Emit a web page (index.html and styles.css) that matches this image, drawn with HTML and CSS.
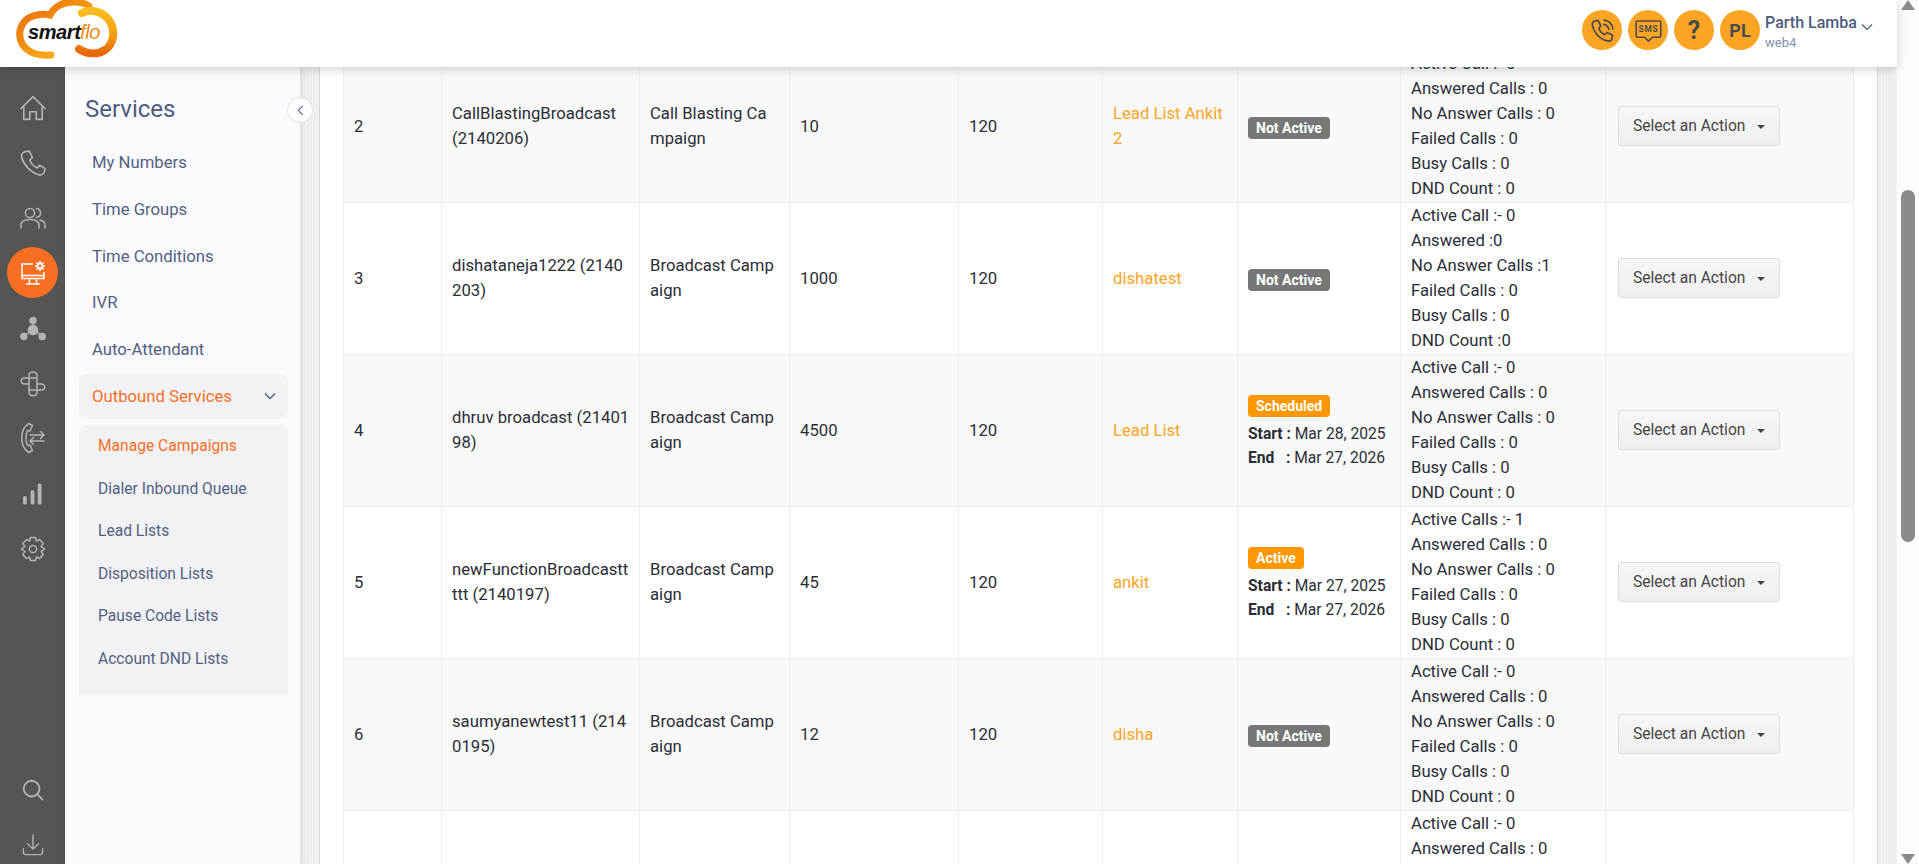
FILE: index.html
```html
<!DOCTYPE html>
<html lang="en">
<head>
    <meta charset="UTF-8">
    <title>Manage Campaigns</title>
    <link rel="stylesheet" href="styles.css">
</head>
<body>

<div class="app">

    <!-- Top header -->
    <header class="topbar">
        <svg class="logo" viewBox="0 0 104 62" width="104" height="62">
            <defs>
                <linearGradient id="logoLeft" x1="0" y1="0" x2="1" y2="1">
                    <stop offset="0" stop-color="#e8670c"/>
                    <stop offset="0.55" stop-color="#f49a10"/>
                    <stop offset="1" stop-color="#fbc02d"/>
                </linearGradient>
                <linearGradient id="logoRight" x1="0" y1="0" x2="0" y2="1">
                    <stop offset="0" stop-color="#fdbd1c"/>
                    <stop offset="0.6" stop-color="#f59a10"/>
                    <stop offset="1" stop-color="#e8670c"/>
                </linearGradient>
            </defs>
            <path d="M36 55 C26 56 14 54 8 45 C1 34 6 20 18 16 C24 14 30 14 35 15 C39 7 48 2 58 2 C64 2 70 3 74 6" fill="none" stroke="url(#logoLeft)" stroke-width="7" stroke-linecap="round"/>
            <path d="M67 13 C76 8 88 12 94 20 C101 30 99 44 90 50 C82 55 72 54 64 49" fill="none" stroke="url(#logoRight)" stroke-width="8" stroke-linecap="round"/>
            <text x="13" y="39" class="logo-smart">smart</text>
            <text x="65" y="39" class="logo-flo">flo</text>
        </svg>

        <div class="topbar-right">
            <span class="round-btn round-btn-first">
                <svg viewBox="0 0 24 24" width="27" height="27" fill="none" stroke="#4a4a4a" stroke-width="1.5" stroke-linecap="round" stroke-linejoin="round">
                    <path d="M5 3.5 L8 3 L10.5 8 L8.6 10 C9.6 12.5 11.5 14.6 14 15.8 L16 13.8 L21 16.2 L20.4 19.4 C20 21 18.6 21.8 17 21.4 C10 20 4.6 14.4 3 7.4 C2.7 5.6 3.5 4 5 3.5 Z"/>
                    <path d="M13 6.5 C15.4 6.8 17.2 8.6 17.6 11"/>
                    <path d="M13.4 2.8 C17.6 3.2 20.8 6.4 21.3 10.6"/>
                </svg>
            </span>
            <span class="round-btn">
                <svg viewBox="0 0 26 24" width="29" height="27" fill="none" stroke="#4a4a4a" stroke-width="1.4" stroke-linejoin="round">
                    <path d="M3 3.5 H23 A1 1 0 0 1 24 4.5 V17 A1 1 0 0 1 23 18 H16.5 L13 21.5 L9.5 18 H3 A1 1 0 0 1 2 17 V4.5 A1 1 0 0 1 3 3.5 Z"/>
                    <text x="13" y="13.6" class="sms-text">SMS</text>
                </svg>
            </span>
            <span class="round-btn round-btn-help">?</span>
            <span class="round-btn round-btn-user">PL</span>
            <div class="user-info">
                <div class="user-name">Parth Lamba</div>
                <div class="user-sub">web4</div>
            </div>
            <svg class="user-caret" viewBox="0 0 12 8" width="12" height="8" fill="none" stroke="#4d5b80" stroke-width="1.2"><path d="M1 1.5 L6 6.5 L11 1.5"/></svg>
        </div>
    </header>

    <div class="below">

        <!-- Icon rail -->
        <nav class="rail">
            <svg class="rail-icon rail-home" viewBox="0 0 24 24"><path d="M1 12.5 L12 1.5 L23 12.5 M3.5 10.5 V22.5 H9 V15.5 H15 V22.5 H20.5 V10.5"/></svg>
            <svg class="rail-icon" viewBox="0 0 24 24"><path d="M5 1.5 L8.5 1 L11.5 7 L9 9.5 C10.4 13 12.6 15.2 16 16.5 L18.2 14 L23 17 L22.6 20 C22 22.4 20 23.4 17.6 22.8 C10 20.8 3.4 14 1.4 6.4 C1 4 2.6 2 5 1.5 Z"/></svg>
            <svg class="rail-icon" viewBox="0 0 26 24"><circle cx="10" cy="7" r="4.6"/><path d="M1 22 V19.5 C1 15.5 4.5 13.5 10 13.5 C15.5 13.5 19 15.5 19 19.5 V22"/><path d="M16.5 2.6 C19 3 20.5 4.8 20.5 7 C20.5 9.2 19 11 16.5 11.4"/><path d="M20 14 C23 14.6 25 16.5 25 19.5 V22"/></svg>
            <span class="rail-active">
                <svg viewBox="0 0 26 26" width="26" height="26" fill="none" stroke="#fff" stroke-width="1.5">
                    <path d="M13 4 H2 V18.5 H24 V12"/>
                    <path d="M2 15.5 H24 M9.5 18.5 V24 M16.5 18.5 V24 M6 24 H20"/>
                    <circle cx="20" cy="6" r="2.4" stroke-width="1.6"/>
                    <path d="M20 1 V3 M20 9 V11 M15 6 H17 M23 6 H25 M16.5 2.5 L17.9 3.9 M22.1 8.1 L23.5 9.5 M23.5 2.5 L22.1 3.9 M17.9 8.1 L16.5 9.5" stroke-width="1.7"/>
                </svg>
            </span>
            <svg class="rail-icon rail-network" viewBox="0 0 26 24">
                <path d="M13 4 V12 M13 12 L4 19 M13 12 L22 19"/>
                <circle cx="13" cy="3.5" r="3"/><circle cx="13" cy="13" r="4.6"/><circle cx="3.8" cy="19.5" r="3"/><circle cx="22.2" cy="19.5" r="3"/>
            </svg>
            <svg class="rail-icon" viewBox="0 0 26 26"><path d="M9 13 H5 C0 13 0 7 5 7 H15 C18 7 18 1 13 1 C8 1 9 5 9 7 V21 C9 26 17 26 17 21 V13"/><path d="M9 19 H21 C26 19 26 13 21 13 H17 V7"/></svg>
            <svg class="rail-icon rail-transfer" viewBox="0 0 24 32"><path d="M8 1.5 C2 5 .8 11 .8 16 C.8 21 2 27 8 30.5 L11.5 28.5 L9 23 L6.5 23.5 C4.6 19 4.6 13 6.5 8.5 L9 9 L11.5 3.5 Z"/><path d="M9 13 H23 M19.5 9.5 L23 13 L19.5 16.5 M23 19 H9 M12.5 15.5 L9 19 L12.5 22.5"/></svg>
            <svg class="rail-bars" viewBox="0 0 20 22" width="19" height="22"><rect x="0" y="13" width="4" height="9" rx="1.6"/><rect x="8" y="7" width="4" height="15" rx="1.6"/><rect x="15.5" y="0" width="4" height="22" rx="1.6"/></svg>
            <svg class="rail-icon" viewBox="0 0 26 26"><circle cx="13" cy="13" r="3.6"/><path d="M10.5 1.5 H15.5 L16.4 5 L19.6 3.4 L23.2 7.6 L21 10.4 L24.6 13 L21 15.6 L23.2 18.4 L19.6 22.6 L16.4 21 L15.5 24.5 H10.5 L9.6 21 L6.4 22.6 L2.8 18.4 L5 15.6 L1.4 13 L5 10.4 L2.8 7.6 L6.4 3.4 L9.6 5 Z"/></svg>
            <div class="rail-bottom">
                <svg class="rail-icon rail-search" viewBox="0 0 24 24"><circle cx="10.5" cy="10.5" r="8.6"/><path d="M17 17 L22.5 22.5"/></svg>
                <svg class="rail-icon rail-download" viewBox="0 0 24 24"><path d="M12 1 V16 M6 10.5 L12 16.5 L18 10.5 M1.5 16 V20 C1.5 21.5 2.5 22.5 4 22.5 H20 C21.5 22.5 22.5 21.5 22.5 20 V16"/></svg>
            </div>
        </nav>

        <!-- Services menu -->
        <aside class="sidebar">
            <span class="sidebar-toggle">
                <svg viewBox="0 0 8 12" width="7" height="11" fill="none" stroke="#4d5b80" stroke-width="1.2"><path d="M6.5 1 L1.5 6 L6.5 11"/></svg>
            </span>
            <h2 class="sidebar-title">Services</h2>
            <ul class="menu">
                <li>My Numbers</li>
                <li>Time Groups</li>
                <li>Time Conditions</li>
                <li>IVR</li>
                <li>Auto-Attendant</li>
                <li class="menu-open">
                    Outbound Services
                    <svg viewBox="0 0 12 8" width="12" height="8" fill="none" stroke="#4d5b80" stroke-width="1.3"><path d="M1 1.5 L6 6.5 L11 1.5"/></svg>
                </li>
            </ul>
            <ul class="submenu">
                <li class="current">Manage Campaigns</li>
                <li>Dialer Inbound Queue</li>
                <li>Lead Lists</li>
                <li>Disposition Lists</li>
                <li>Pause Code Lists</li>
                <li>Account DND Lists</li>
            </ul>
        </aside>

        <!-- Campaign table, scrolled part way down -->
        <main class="content">
            <div class="panel">
                <table class="campaigns">
                    <colgroup>
                        <col class="col-no"><col class="col-name"><col class="col-type"><col class="col-num">
                        <col class="col-num2"><col class="col-list"><col class="col-status"><col class="col-stats"><col>
                    </colgroup>
                    <tr>
                        <td>2</td>
                        <td>CallBlastingBroadcast (2140206)</td>
                        <td>Call Blasting Campaign</td>
                        <td>10</td>
                        <td>120</td>
                        <td><a class="list-link">Lead List Ankit 2</a></td>
                        <td><span class="badge badge-off">Not Active</span></td>
                        <td>Active Call :- 0<br>Answered Calls : 0<br>No Answer Calls : 0<br>Failed Calls : 0<br>Busy Calls : 0<br>DND Count : 0</td>
                        <td><button class="action-btn">Select an Action<span class="caret"></span></button></td>
                    </tr>
                    <tr>
                        <td>3</td>
                        <td>dishataneja1222 (2140203)</td>
                        <td>Broadcast Campaign</td>
                        <td>1000</td>
                        <td>120</td>
                        <td><a class="list-link">dishatest</a></td>
                        <td><span class="badge badge-off">Not Active</span></td>
                        <td>Active Call :- 0<br>Answered :0<br>No Answer Calls :1<br>Failed Calls : 0<br>Busy Calls : 0<br>DND Count :0</td>
                        <td><button class="action-btn">Select an Action<span class="caret"></span></button></td>
                    </tr>
                    <tr>
                        <td>4</td>
                        <td>dhruv broadcast (2140198)</td>
                        <td>Broadcast Campaign</td>
                        <td>4500</td>
                        <td>120</td>
                        <td><a class="list-link">Lead List</a></td>
                        <td>
                            <span class="badge badge-on">Scheduled</span>
                            <div class="dates"><b>Start :</b> Mar 28, 2025<br><b>End &nbsp;&nbsp;:</b> Mar 27, 2026</div>
                        </td>
                        <td>Active Call :- 0<br>Answered Calls : 0<br>No Answer Calls : 0<br>Failed Calls : 0<br>Busy Calls : 0<br>DND Count : 0</td>
                        <td><button class="action-btn">Select an Action<span class="caret"></span></button></td>
                    </tr>
                    <tr>
                        <td>5</td>
                        <td>newFunctionBroadcasttttt (2140197)</td>
                        <td>Broadcast Campaign</td>
                        <td>45</td>
                        <td>120</td>
                        <td><a class="list-link">ankit</a></td>
                        <td>
                            <span class="badge badge-on">Active</span>
                            <div class="dates"><b>Start :</b> Mar 27, 2025<br><b>End &nbsp;&nbsp;:</b> Mar 27, 2026</div>
                        </td>
                        <td>Active Calls :- 1<br>Answered Calls : 0<br>No Answer Calls : 0<br>Failed Calls : 0<br>Busy Calls : 0<br>DND Count : 0</td>
                        <td><button class="action-btn">Select an Action<span class="caret"></span></button></td>
                    </tr>
                    <tr>
                        <td>6</td>
                        <td>saumyanewtest11 (2140195)</td>
                        <td>Broadcast Campaign</td>
                        <td>12</td>
                        <td>120</td>
                        <td><a class="list-link">disha</a></td>
                        <td><span class="badge badge-off">Not Active</span></td>
                        <td>Active Call :- 0<br>Answered Calls : 0<br>No Answer Calls : 0<br>Failed Calls : 0<br>Busy Calls : 0<br>DND Count : 0</td>
                        <td><button class="action-btn">Select an Action<span class="caret"></span></button></td>
                    </tr>
                    <tr>
                        <td></td>
                        <td></td>
                        <td></td>
                        <td></td>
                        <td></td>
                        <td></td>
                        <td></td>
                        <td>Active Call :- 0<br>Answered Calls : 0<br>No Answer Calls : 0<br>Failed Calls : 0<br>Busy Calls : 0<br>DND Count : 0</td>
                        <td></td>
                    </tr>
                </table>
            </div>
        </main>
    </div>
</div>

<!-- Page scrollbar -->
<div class="scrollbar">
    <span class="arrow-up"></span>
    <span class="thumb"></span>
    <span class="arrow-down"></span>
</div>

</body>
</html>
```

FILE: styles.css
```css
* {
    box-sizing: border-box;
}

html, body {
    height: 100%;
}

body {
    margin: 0;
    display: flex;
    overflow: hidden;
    font-family: "Roboto", "Liberation Sans", sans-serif;
    font-size: 16.7px;
    color: #2b2d36;
    background-color: #fff;
}

.app {
    flex: 1;
    min-width: 0;
    display: flex;
    flex-direction: column;
}

/* Top header */
.topbar {
    height: 67px;
    flex-shrink: 0;
    padding: 0 24px 0 15px;
    display: flex;
    align-items: flex-start;
    justify-content: space-between;
    background-color: #fff;
    box-shadow: 0 2px 10px rgba(0, 0, 0, 0.18);
    position: relative;
    z-index: 3;
}

.logo {
    display: block;
}

.logo-smart {
    font-family: "Liberation Sans", sans-serif;
    font-size: 20px;
    font-weight: bold;
    font-style: italic;
    letter-spacing: -0.4px;
    fill: #111;
}

.logo-flo {
    font-family: "Liberation Sans", sans-serif;
    font-size: 20px;
    font-style: italic;
    letter-spacing: -0.4px;
    fill: #f08a10;
}

.topbar-right {
    display: flex;
    align-items: center;
    padding-top: 10px;
}

.round-btn {
    width: 40px;
    height: 40px;
    margin-right: 6px;
    border-radius: 50%;
    display: flex;
    align-items: center;
    justify-content: center;
    background-color: #fca524;
    color: #4a4a4a;
    font-weight: bold;
}

.sms-text {
    font-family: "Roboto", sans-serif;
    font-size: 7.5px;
    font-weight: bold;
    letter-spacing: 0.7px;
    text-anchor: middle;
    fill: #4a4a4a;
    stroke: none;
}

.round-btn-help {
    font-size: 25px;
}

.round-btn-user {
    font-size: 18px;
    margin-right: 5px;
}

.user-info {
    width: 96px;
}

.user-name {
    font-size: 16px;
    font-weight: 500;
    line-height: 24px;
    color: #4d5b80;
}

.user-sub {
    font-size: 13px;
    line-height: 15px;
    color: #8490ad;
}

.user-caret {
    margin-top: -6px;
}

.below {
    flex: 1;
    min-height: 0;
    display: flex;
}

/* Icon rail */
.rail {
    width: 65px;
    flex-shrink: 0;
    padding-top: 28px;
    display: flex;
    flex-direction: column;
    align-items: center;
    background-color: #555;
}

.rail-icon {
    width: 26px;
    height: 26px;
    margin-bottom: 29px;
    fill: none;
    stroke: #b4b4b4;
    stroke-width: 1.5;
    stroke-linejoin: round;
    stroke-linecap: round;
    flex-shrink: 0;
}

.rail-active {
    width: 51px;
    height: 51px;
    margin: -13px 0 18px;
    border-radius: 50%;
    display: flex;
    align-items: center;
    justify-content: center;
    background-color: #f86f24;
    flex-shrink: 0;
}

.rail-network circle {
    fill: #b4b4b4;
}

.rail-transfer {
    height: 32px;
    margin-top: -4px;
    margin-bottom: 29px;
}

.rail-bars {
    fill: #b4b4b4;
    margin-bottom: 31px;
    flex-shrink: 0;
}

.rail-bottom {
    margin-top: auto;
    display: flex;
    flex-direction: column;
    align-items: center;
}

.rail-search {
    width: 22px;
    height: 22px;
    margin-bottom: 33px;
    stroke-width: 2;
}

.rail-download {
    width: 22px;
    height: 22px;
    margin-bottom: 8px;
}

/* Services menu */
.sidebar {
    width: 235px;
    flex-shrink: 0;
    padding: 0 12px 0 14px;
    background-color: #fbfbff;
    box-shadow: 2px 0 5px rgba(0, 0, 0, 0.08);
    position: relative;
    z-index: 2;
}

.sidebar-toggle {
    position: absolute;
    top: 30px;
    right: -13px;
    width: 26px;
    height: 26px;
    border: 1px solid #dfe0e6;
    border-radius: 50%;
    display: flex;
    align-items: center;
    justify-content: center;
    background-color: #fff;
}

.sidebar-title {
    margin: 26px 0 15px 6px;
    font-size: 24px;
    font-weight: 400;
    line-height: 32px;
    color: #4d5b80;
}

.menu, .submenu {
    list-style: none;
    margin: 0;
    padding: 0;
    color: #52607f;
}

.menu li {
    height: 45px;
    margin-bottom: 1.8px;
    padding: 0 12px 0 13px;
    line-height: 45px;
}

.menu-open {
    display: flex;
    align-items: center;
    justify-content: space-between;
    border-radius: 8px;
    background-color: #f3f3f7;
    color: #f86f24;
}

.submenu {
    height: 270px;
    margin-top: 6px;
    padding: 0 19px;
    border-radius: 8px 8px 0 0;
    background-color: #f2f2f6;
    font-size: 15.6px;
}

.submenu li {
    height: 42.6px;
    line-height: 43px;
}

.submenu .current {
    color: #f86f24;
}

/* Campaign table */
.content {
    flex: 1;
    min-width: 0;
    padding: 0 19px;
    overflow: hidden;
    background-color: #ededed;
    background-image: repeating-linear-gradient(90deg, rgba(255, 255, 255, 0.25) 0 1px, transparent 1px 3px);
}

.panel {
    display: flow-root;
    height: 100%;
    padding: 0 22px 0 23px;
    border-left: 1px solid #d8d8d8;
    border-right: 1px solid #d8d8d8;
    background-color: #fff;
}

.campaigns {
    width: 1511px;
    margin-top: -17px;
    table-layout: fixed;
    border-collapse: collapse;
    border-left: 1px solid #ddd;
    border-right: 1px solid #ddd;
}

.col-no { width: 98px; }
.col-name { width: 198px; }
.col-type { width: 150px; }
.col-num { width: 169px; }
.col-num2 { width: 144px; }
.col-list { width: 135px; }
.col-status { width: 163px; }
.col-stats { width: 205px; }

.campaigns td {
    height: 152px;
    padding: 0 10px 1px;
    border: 1px solid #eee;
    line-height: 25px;
    vertical-align: middle;
    word-break: break-all;
}

.campaigns td:nth-child(2) {
    padding-right: 8px;
}

.campaigns td:nth-child(7) {
    padding: 1px 10px 0;
}

.campaigns tr:nth-child(odd) {
    background-color: #f9f9f9;
}

.list-link {
    color: #fda425;
}

.badge {
    display: inline-block;
    height: 22px;
    padding: 0 8px;
    border-radius: 4px;
    font-size: 14px;
    font-weight: bold;
    line-height: 22px;
    color: #fff;
    vertical-align: middle;
}

.badge-on {
    background-color: #ff9800;
}

.badge-off {
    background-color: #777;
}

.dates {
    margin-top: 4px;
    font-size: 15.6px;
    line-height: 24px;
    white-space: nowrap;
}

.dates b {
    font-weight: 700;
}

.action-btn {
    display: block;
    width: 162px;
    height: 40px;
    margin-left: 2px;
    padding: 0 0 0 14px;
    border: 1px solid #ddd;
    border-radius: 3px;
    font-family: inherit;
    font-size: 15.6px;
    text-align: left;
    color: #444;
    background-image: linear-gradient(#f7f7f7, #efefef);
}

.caret {
    display: inline-block;
    margin-left: 12px;
    border-top: 4px solid #444;
    border-left: 4px solid transparent;
    border-right: 4px solid transparent;
    vertical-align: middle;
}

/* Page scrollbar */
.scrollbar {
    width: 22px;
    flex-shrink: 0;
    display: flex;
    flex-direction: column;
    align-items: center;
    background-color: #fdfdfd;
}

.arrow-up, .arrow-down {
    width: 0;
    height: 0;
    border-left: 7px solid transparent;
    border-right: 7px solid transparent;
}

.arrow-up {
    border-bottom: 10px solid #8b8b8b;
}

.arrow-down {
    margin-top: auto;
    border-top: 10px solid #8b8b8b;
}

.thumb {
    width: 14px;
    height: 352px;
    margin-top: 180px;
    border-radius: 7px;
    background-color: #8b8b8b;
}
```
